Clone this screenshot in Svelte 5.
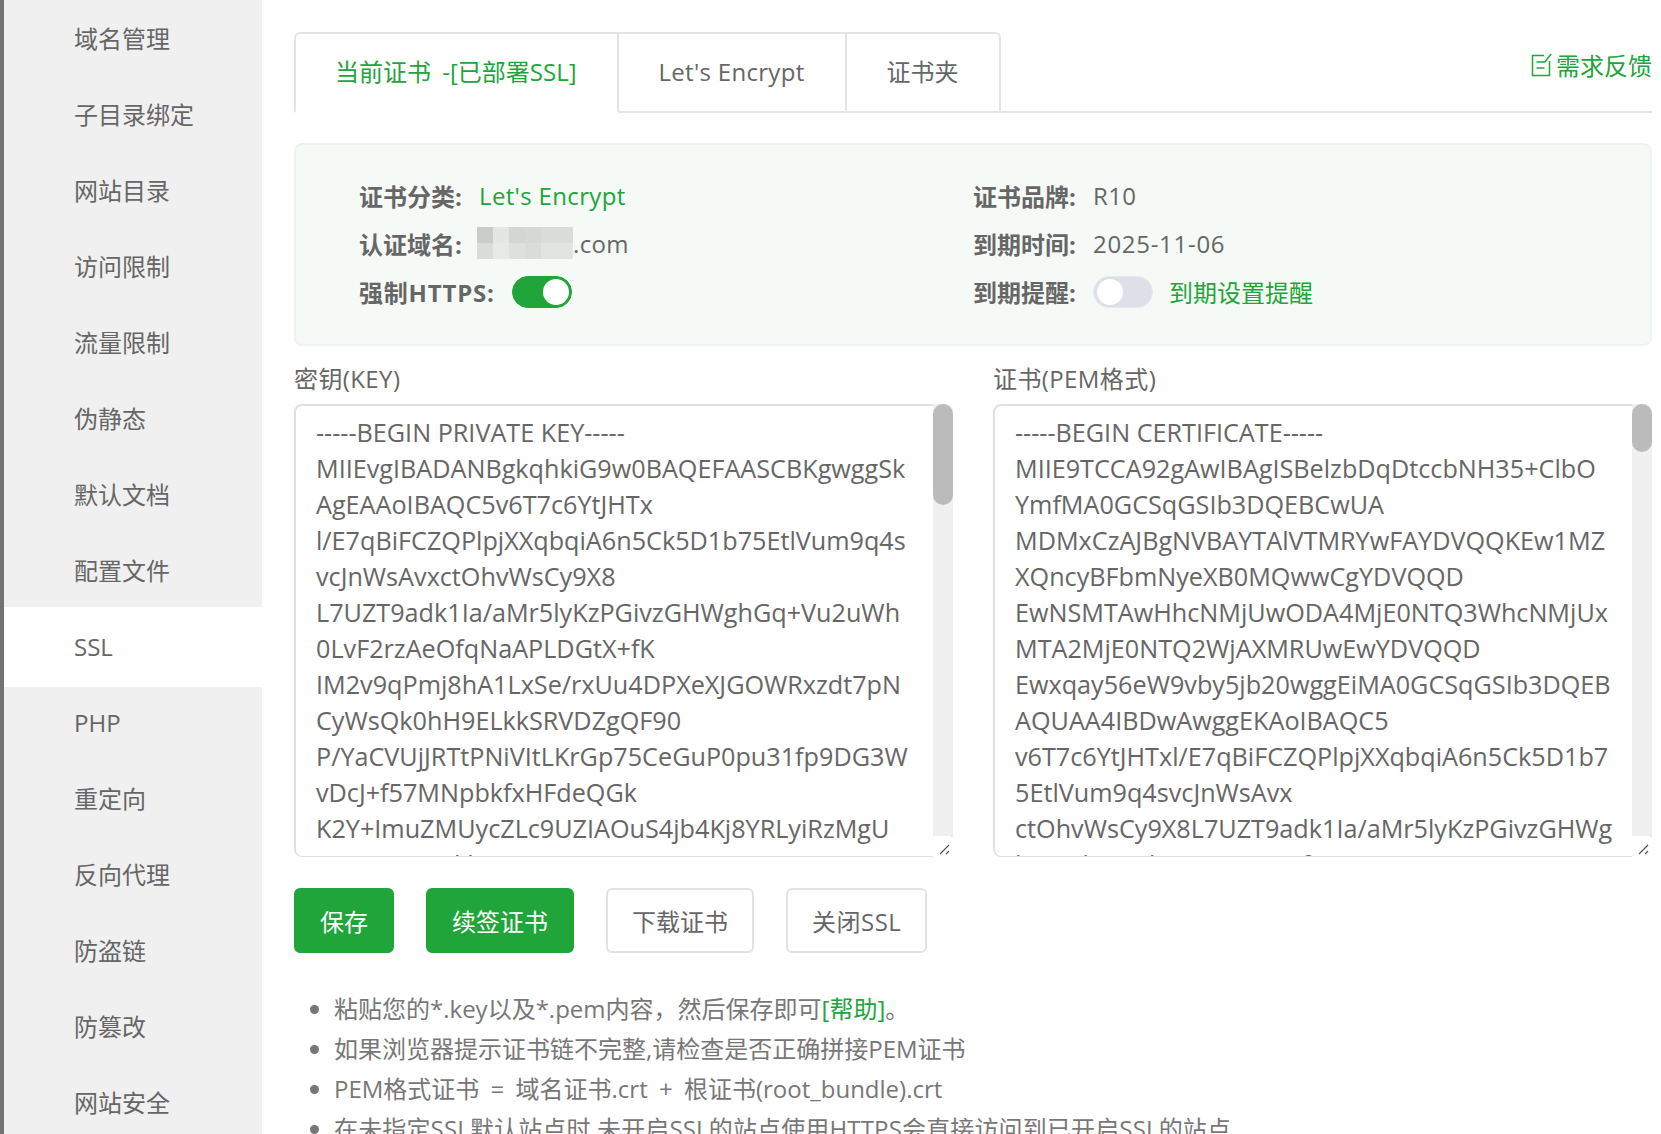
<script>
  const menu = ["域名管理", "子目录绑定", "网站目录", "访问限制", "流量限制", "伪静态", "默认文档", "配置文件", "SSL", "PHP", "重定向", "反向代理", "防盗链", "防篡改", "网站安全"];

  const keyText = `-----BEGIN PRIVATE KEY-----
MIIEvgIBADANBgkqhkiG9w0BAQEFAASCBKgwggSk
AgEAAoIBAQC5v6T7c6YtJHTx
l/E7qBiFCZQPlpjXXqbqiA6n5Ck5D1b75EtlVum9q4s
vcJnWsAvxctOhvWsCy9X8
L7UZT9adk1Ia/aMr5lyKzPGivzGHWghGq+Vu2uWh
0LvF2rzAeOfqNaAPLDGtX+fK
IM2v9qPmj8hA1LxSe/rxUu4DPXeXJGOWRxzdt7pN
CyWsQk0hH9ELkkSRVDZgQF90
P/YaCVUjJRTtPNiVItLKrGp75CeGuP0pu31fp9DG3W
vDcJ+f57MNpbkfxHFdeQGk
K2Y+ImuZMUycZLc9UZIAOuS4jb4Kj8YRLyiRzMgU
1WEpmuUSkbG6uB2GvB1B07J/6S`;

  const certText = `-----BEGIN CERTIFICATE-----
MIIE9TCCA92gAwIBAgISBelzbDqDtccbNH35+ClbO
YmfMA0GCSqGSIb3DQEBCwUA
MDMxCzAJBgNVBAYTAlVTMRYwFAYDVQQKEw1MZ
XQncyBFbmNyeXB0MQwwCgYDVQQD
EwNSMTAwHhcNMjUwODA4MjE0NTQ3WhcNMjUx
MTA2MjE0NTQ2WjAXMRUwEwYDVQQD
Ewxqay56eW9vby5jb20wggEiMA0GCSqGSIb3DQEB
AQUAA4IBDwAwggEKAoIBAQC5
v6T7c6YtJHTxl/E7qBiFCZQPlpjXXqbqiA6n5Ck5D1b7
5EtlVum9q4svcJnWsAvx
ctOhvWsCy9X8L7UZT9adk1Ia/aMr5lyKzPGivzGHWg
hGuUk8uWk8LvF3rzAeOfq`;

  const blur = ["#c9ccc8", "#e3e6e1", "#d3d7d2", "#d5d8d3", "#d9dcd7", "#d9dcd7", "#d9dcd8", "#e7e9e4", "#dde0db", "#d9dcd7", "#e1e4df", "#e1e4df"];
</script>

<div class="page">
  <aside class="side">
    {#each menu as item}
      <div class="item" class:active={item === "SSL"}>{item}</div>
    {/each}
  </aside>

  <main class="content">
    <div class="tabs">
      <div class="tab on">当前证书 -[已部署SSL]</div>
      <div class="tab">Let's Encrypt</div>
      <div class="tab">证书夹</div>
      <div class="feedback">
        <svg width="21" height="24" viewBox="0 0 21 24" fill="none" stroke="#20a53a" stroke-width="1.5">
          <path d="M13 2.5H1.5v20h17V8" />
          <path d="M5.5 9h8M5.5 15h8" />
          <path d="M13.5 9.5 20 1" />
        </svg>
        <span>需求反馈</span>
      </div>
    </div>

    <section class="info">
      <div class="info-row"><b>证书分类:</b><span class="green">Let's Encrypt</span></div>
      <div class="info-row"><b>证书品牌:</b><span>R10</span></div>
      <div class="info-row">
        <b>认证域名:</b>
        <span class="blur">
          {#each blur as color}
            <i style="background:{color}"></i>
          {/each}
        </span>
        <span>.com</span>
      </div>
      <div class="info-row"><b>到期时间:</b><span class="date">2025-11-06</span></div>
      <div class="info-row">
        <b class="auto">强制HTTPS:</b>
        <span class="switch on"></span>
      </div>
      <div class="info-row">
        <b>到期提醒:</b>
        <span class="switch"></span>
        <span class="green remind">到期设置提醒</span>
      </div>
    </section>

    <div class="editors">
      <div class="editor">
        <div class="editor-title">密钥(KEY)</div>
        <div class="box">
          <textarea readonly value={keyText}></textarea>
          <div class="track"><div class="thumb key"></div></div>
          <div class="grip">
            <svg width="12" height="12" viewBox="0 0 12 12" stroke="#555" stroke-width="1.2">
              <path d="M1 11 10 2M7 11l3-3" />
            </svg>
          </div>
        </div>
      </div>
      <div class="editor">
        <div class="editor-title">证书(PEM格式)</div>
        <div class="box">
          <textarea readonly value={certText}></textarea>
          <div class="track"><div class="thumb cert"></div></div>
          <div class="grip">
            <svg width="12" height="12" viewBox="0 0 12 12" stroke="#555" stroke-width="1.2">
              <path d="M1 11 10 2M7 11l3-3" />
            </svg>
          </div>
        </div>
      </div>
    </div>

    <div class="actions">
      <button class="primary">保存</button>
      <button class="primary">续签证书</button>
      <button>下载证书</button>
      <button>关闭SSL</button>
    </div>

    <ul class="tips">
      <li>粘贴您的*.key以及*.pem内容，然后保存即可<span class="green">[帮助]</span>。</li>
      <li>如果浏览器提示证书链不完整,请检查是否正确拼接PEM证书</li>
      <li>PEM格式证书 = 域名证书.crt + 根证书(root_bundle).crt</li>
      <li>在未指定SSL默认站点时,未开启SSL的站点使用HTTPS会直接访问到已开启SSL的站点</li>
    </ul>
  </main>
</div>

<style>
  :global(body) {
    margin: 0;
    background: #fff;
    overflow: hidden;
  }
  .page {
    display: grid;
    grid-template-columns: 262px 1fr;
    height: 1134px;
    overflow: hidden;
    font-family: "Open Sans", "Noto Sans CJK SC", sans-serif;
    font-size: 24px;
    color: #666;
  }

  .side {
    background: #f0f0f0;
    border-left: 4px solid #727272;
    padding-top: 1px;
  }
  .item {
    height: 76px;
    line-height: 76px;
    padding-left: 70px;
    color: #666;
  }
  .item.active {
    background: #fff;
    margin: -2px 0;
    padding-top: 2px;
    padding-bottom: 2px;
  }

  .content {
    padding: 32px 9px 0 32px;
    min-width: 0;
  }
  .green {
    color: #20a53a;
  }

  .tabs {
    display: flex;
    height: 79px;
    border-bottom: 2px solid #e4e4e4;
  }
  .tab {
    box-sizing: border-box;
    height: 81px;
    line-height: 76px;
    padding: 0 40px;
    border: 2px solid #e4e4e4;
    border-left: 0;
    white-space: nowrap;
  }
  .tab:nth-child(2) {
    letter-spacing: 0.3px;
  }
  .tab:nth-child(3) {
    border-radius: 0 6px 0 0;
  }
  .tab.on {
    padding-left: 39px;
    border-left: 2px solid #e4e4e4;
    border-bottom-color: #fff;
    border-radius: 6px 0 0 0;
    color: #20a53a;
    word-spacing: 5px;
  }
  .feedback {
    margin-left: auto;
    display: flex;
    align-items: center;
    height: 65px;
    color: #20a53a;
  }
  .feedback svg {
    margin-right: 4px;
  }

  .info {
    box-sizing: border-box;
    height: 203px;
    margin-top: 30px;
    padding: 26px 0 0 63px;
    display: grid;
    grid-template-columns: 614px 1fr;
    grid-auto-rows: 48px;
    background: #f5faf6;
    border: 2px solid #eff3f0;
    border-radius: 8px;
  }
  .info-row {
    display: flex;
    align-items: center;
    white-space: nowrap;
    letter-spacing: 0.35px;
  }
  .info-row b {
    width: 120px;
    font-weight: 700;
    color: #666;
    letter-spacing: 0;
  }
  .info-row b.auto {
    width: 153px;
    letter-spacing: 0.8px;
  }
  .date {
    letter-spacing: 0.7px;
  }
  .blur {
    display: grid;
    grid-template-columns: repeat(6, 16px);
    grid-template-rows: 16px 16px;
    margin-left: -2px;
  }
  .blur i {
    display: block;
  }
  .switch {
    box-sizing: border-box;
    display: block;
    position: relative;
    width: 60px;
    height: 32px;
    margin-top: 2px;
    border-radius: 16px;
    background: #dfdfe8;
    border: 1px solid #e8e8ee;
  }
  .switch::after {
    content: "";
    position: absolute;
    top: 2px;
    left: 3px;
    width: 26px;
    height: 26px;
    border-radius: 50%;
    background: #fff;
  }
  .switch.on {
    background: #20a53a;
    border-color: #20a53a;
  }
  .switch.on::after {
    left: 30px;
  }
  .remind {
    margin-left: 16px;
    letter-spacing: 0;
  }

  .editors {
    display: grid;
    grid-template-columns: 659px 659px;
    gap: 40px;
    margin-top: 15px;
  }
  .editor-title {
    line-height: 36px;
    margin-bottom: 7px;
    letter-spacing: 0.4px;
  }
  .box {
    position: relative;
    height: 453px;
  }
  textarea {
    display: block;
    box-sizing: border-box;
    width: 100%;
    height: 100%;
    margin: 0;
    padding: 8px 20px 0;
    border: 2px solid #dfdfe4;
    border-bottom-width: 1px;
    border-radius: 8px;
    outline: none;
    resize: none;
    overflow: hidden;
    white-space: pre;
    font-family: inherit;
    font-size: 25.2px;
    line-height: 36px;
    color: #666;
  }
  .track {
    position: absolute;
    top: 0;
    right: 0;
    bottom: 21px;
    width: 20px;
    background: #f0f0f0;
    border-radius: 0 8px 0 0;
  }
  .thumb {
    background: #bbb;
    border-radius: 10px;
  }
  .thumb.key {
    height: 101px;
  }
  .thumb.cert {
    height: 48px;
  }
  .grip {
    position: absolute;
    right: 0;
    bottom: 0;
    width: 20px;
    height: 20px;
    display: flex;
    align-items: flex-end;
    justify-content: flex-end;
    background: #fff;
    padding: 0 2px 2px 0;
    box-sizing: border-box;
  }

  .actions {
    display: flex;
    gap: 32px;
    margin-top: 31px;
  }
  button {
    box-sizing: border-box;
    height: 65px;
    padding: 0 24px;
    border: 2px solid #e2e2e2;
    border-radius: 6px;
    background: #fff;
    font: inherit;
    color: #666;
  }
  button:last-child {
    letter-spacing: 0.5px;
  }
  button.primary {
    background: #20a53a;
    border-color: #20a53a;
    color: #fff;
  }

  .tips {
    margin: 36px 0 0;
    padding: 0 0 0 40px;
    line-height: 40px;
    color: #777;
    white-space: nowrap;
  }
  .tips li:nth-child(3) {
    word-spacing: 5px;
  }
  .tips li:nth-child(4) {
    letter-spacing: 0.15px;
  }
</style>
